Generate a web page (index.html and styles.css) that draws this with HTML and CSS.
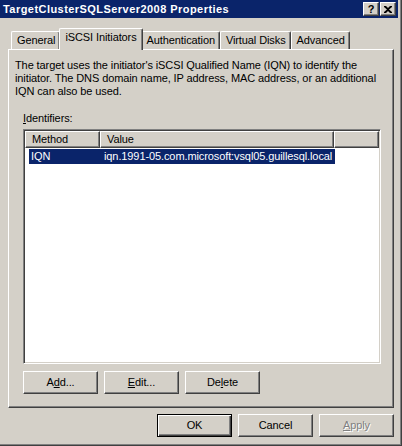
FILE: index.html
```html
<!DOCTYPE html>
<html lang="en">
<head>
    <meta charset="UTF-8">
    <title>TargetClusterSQLServer2008 Properties</title>
    <link rel="stylesheet" href="styles.css">
</head>
<body>
    <div class="window">
        <div class="titlebar">
            <span class="title">TargetClusterSQLServer2008 Properties</span>
            <div class="caption-btns">
                <div class="cap-btn help">?</div>
                <div class="cap-btn close">
                    <svg width="8" height="7" viewBox="0 0 8 7">
                        <path d="M0 0h2l2 2 2-2h2v1L5 3.5 8 6v1H6L4 5 2 7H0V6l3-2.5L0 1z" fill="#000"/>
                    </svg>
                </div>
            </div>
        </div>

        <div class="tabs">
            <div class="tab">General</div>
            <div class="tab active">iSCSI Initiators</div>
            <div class="tab">Authentication</div>
            <div class="tab">Virtual Disks</div>
            <div class="tab">Advanced</div>
        </div>

        <div class="panel">
            <p class="desc">The target uses the initiator's iSCSI Qualified Name (IQN) to identify the initiator. The DNS domain name, IP address, MAC address, or an additional IQN can also be used.</p>

            <div class="group">
                <div class="label"><u>I</u>dentifiers:</div>
                <div class="listview">
                    <div class="lv-header">
                        <div class="hcell col-method">Method</div>
                        <div class="hcell col-value">Value</div>
                        <div class="hcell col-fill"></div>
                    </div>
                    <div class="lv-row selected">
                        <span class="cell-method">IQN</span>
                        <span class="cell-value">iqn.1991-05.com.microsoft:vsql05.guillesql.local</span>
                    </div>
                </div>
                <div class="btn-row">
                    <div class="btn">A<u>d</u>d...</div>
                    <div class="btn"><u>E</u>dit...</div>
                    <div class="btn">De<u>l</u>ete</div>
                </div>
            </div>
        </div>

        <div class="dialog-btns">
            <div class="btn default">OK</div>
            <div class="btn">Cancel</div>
            <div class="btn disabled"><u>A</u>pply</div>
        </div>
    </div>
</body>
</html>
```

FILE: styles.css
```css
* {
    box-sizing: border-box;
}
body {
    margin: 0;
    background: #d4d0c8;
    font-family: "Liberation Sans", Arial, sans-serif;
    font-size: 11px;
    line-height: 13px;
    letter-spacing: -0.1px;
    color: #000;
}
.window {
    width: 402px;
    height: 446px;
    background: #d4d0c8;
    padding: 0 4px 4px 0;
    box-shadow: inset -1px -1px #404040, inset -2px -2px #808080;
}

/* title bar */
.titlebar {
    height: 18px;
    background: #0a246a;
    display: flex;
    align-items: center;
    justify-content: space-between;
    padding: 0 2px 0 3px;
}
.title {
    color: #fff;
    font-weight: bold;
    font-size: 11px;
    letter-spacing: 0.45px;
}
.caption-btns {
    display: flex;
    gap: 1px;
}
.cap-btn {
    width: 16px;
    height: 14px;
    background: #d4d0c8;
    border: 1px solid;
    border-color: #fff #404040 #404040 #fff;
    box-shadow: inset -1px -1px #808080;
    display: flex;
    align-items: center;
    justify-content: center;
    font-weight: bold;
    font-size: 11px;
    line-height: 11px;
    letter-spacing: 0;
}
.cap-btn svg {
    display: block;
}

/* tabs */
.tabs {
    display: flex;
    align-items: flex-end;
    padding: 10px 0 0 11px;
    height: 31px;
}
.tab {
    height: 18px;
    padding: 2px 4px 0 5px;
    background: #d4d0c8;
    border-top: 1px solid #fff;
    border-left: 1px solid #fff;
    border-right: 1px solid #404040;
    box-shadow: inset -1px 0 #808080;
    border-radius: 2px 2px 0 0;
    white-space: nowrap;
}
.tab.active {
    height: 22px;
    margin: 0 -2px -1px -1px;
    padding: 2px 5px 0 5px;
    position: relative;
    z-index: 1;
}

/* panel */
.panel {
    height: 359px;
    margin: 0 4px 0 8px;
    padding: 9px 0 0 6px;
    border-top: 1px solid #fff;
    border-left: 1px solid #fff;
    border-right: 1px solid #404040;
    border-bottom: 1px solid #404040;
    box-shadow: inset -1px -1px #808080;
}
.desc {
    margin: 0;
    width: 370px;
}
.group {
    margin: 14px 0 0 8px;
}
.label {
    height: 13px;
    margin-bottom: 4px;
}

/* list view */
.listview {
    width: 358px;
    height: 235px;
    background: #fff;
    border: 1px solid;
    border-color: #808080 #fff #fff #808080;
    box-shadow: inset 1px 1px #404040, inset -1px -1px #d4d0c8;
    padding: 1px;
}
.lv-header {
    display: flex;
    height: 17px;
}
.hcell {
    height: 17px;
    background: #d4d0c8;
    border: 1px solid;
    border-color: #fff #404040 #404040 #fff;
    box-shadow: inset -1px -1px #808080;
    padding: 1px 0 0 6px;
}
.col-method {
    width: 75px;
}
.col-value {
    width: 234px;
}
.col-fill {
    flex: 1;
}
.lv-row {
    display: flex;
    width: 306px;
    height: 15px;
    margin: 1px 0 0 4px;
    padding: 1px 0 0 2px;
    white-space: nowrap;
}
.lv-row.selected {
    background: #0a246a;
    color: #fff;
}
.cell-method {
    width: 73px;
    flex-shrink: 0;
}

/* buttons */
.btn-row {
    display: flex;
    gap: 6px;
    margin-top: 7px;
}
.btn {
    width: 75px;
    height: 23px;
    background: #d4d0c8;
    border: 1px solid;
    border-color: #fff #404040 #404040 #fff;
    box-shadow: inset -1px -1px #808080;
    display: flex;
    align-items: center;
    justify-content: center;
}
.btn.default {
    border: 1px solid #000;
    box-shadow: inset 1px 1px #fff, inset -1px -1px #404040, inset -2px -2px #808080;
}
.btn.disabled {
    color: #808080;
    text-shadow: 1px 1px #fff;
}
.dialog-btns {
    display: flex;
    justify-content: flex-end;
    gap: 6px;
    margin: 6px 4px 0 0;
}
```
